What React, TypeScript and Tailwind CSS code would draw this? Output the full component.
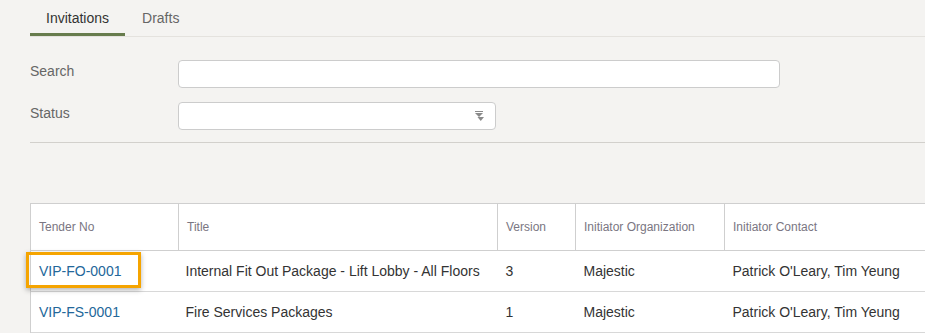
import React from "react";

const rows = [
  {
    no: "VIP-FO-0001",
    title: "Internal Fit Out Package - Lift Lobby - All Floors",
    version: "3",
    org: "Majestic",
    contact: "Patrick O'Leary, Tim Yeung",
    highlight: true,
  },
  {
    no: "VIP-FS-0001",
    title: "Fire Services Packages",
    version: "1",
    org: "Majestic",
    contact: "Patrick O'Leary, Tim Yeung",
    highlight: false,
  },
];

function SortIcon() {
  return (
    <svg width="11" height="10" viewBox="0 0 11 10" className="text-[#8a8a8a]">
      <rect x="1" y="0" width="8" height="1" fill="currentColor" />
      <path d="M1 2 H9 L5 6 Z" fill="currentColor" />
      <path d="M3.5 6 H10 L6.75 10 Z" fill="currentColor" />
    </svg>
  );
}

export default function App() {
  return (
    <div className="w-[925px] h-[333px] overflow-hidden bg-[#f4f3f1] pl-[30px] font-['Liberation_Sans',Arial,sans-serif]">
      {/* Tabs */}
      <div className="flex h-[37px] border-b border-[#e4e2de]">
        <div className="px-4 flex items-center h-full border-b-[3px] border-[#677c4d] text-[14px] text-[#333] pt-[3px]">
          Invitations
        </div>
        <div className="px-[17px] flex items-center h-full text-[14px] text-[#666]">
          Drafts
        </div>
      </div>

      {/* Filters */}
      <div className="pt-[23px] flex flex-col gap-[14px]">
        <div className="flex items-center">
          <label className="w-[148px] text-[14px] text-[#666] -mt-[6px]">Search</label>
          <input className="w-[602px] h-[28px] bg-white border border-[#cccccc] rounded-[4px] outline-none" />
        </div>
        <div className="flex items-center">
          <label className="w-[148px] text-[14px] text-[#666] -mt-[6px]">Status</label>
          <div className="w-[318px] h-[28px] bg-white border border-[#cccccc] rounded-[4px] flex items-center justify-end pr-[10px]">
            <SortIcon />
          </div>
        </div>
      </div>

      <div className="mt-[12px] border-t border-[#d2d0cc]" />

      {/* Table */}
      <table className="mt-[60px] w-[920px] border-collapse bg-white table-fixed">
        <colgroup>
          <col className="w-[148px]" />
          <col className="w-[319px]" />
          <col className="w-[78px]" />
          <col className="w-[149px]" />
          <col />
        </colgroup>
        <thead>
          <tr className="h-[47px]">
            {["Tender No", "Title", "Version", "Initiator Organization", "Initiator Contact"].map((h) => (
              <th
                key={h}
                className="border border-[#cfcfcf] text-left font-normal text-[12px] text-[#7a7682] pl-[8px]"
              >
                {h}
              </th>
            ))}
          </tr>
        </thead>
        <tbody>
          {rows.map((r) => (
            <tr key={r.no} className="h-[41px] border-b border-[#d8d8d8] text-[14px] text-[#333]">
              <td className="border-l border-[#cfcfcf] pl-[8px] relative">
                {r.highlight && (
                  <div className="absolute left-[-5px] top-[1px] w-[115px] h-[36px] border-[3px] border-[#f5a400] shadow-[0_2px_5px_rgba(0,0,0,0.3)]" />
                )}
                <span className="text-[#23679a]">{r.no}</span>
              </td>
              <td className="pl-[7px]">{r.title}</td>
              <td className="pl-[8px]">{r.version}</td>
              <td className="pl-[8px]">{r.org}</td>
              <td className="pl-[8px]">{r.contact}</td>
            </tr>
          ))}
        </tbody>
      </table>
    </div>
  );
}
